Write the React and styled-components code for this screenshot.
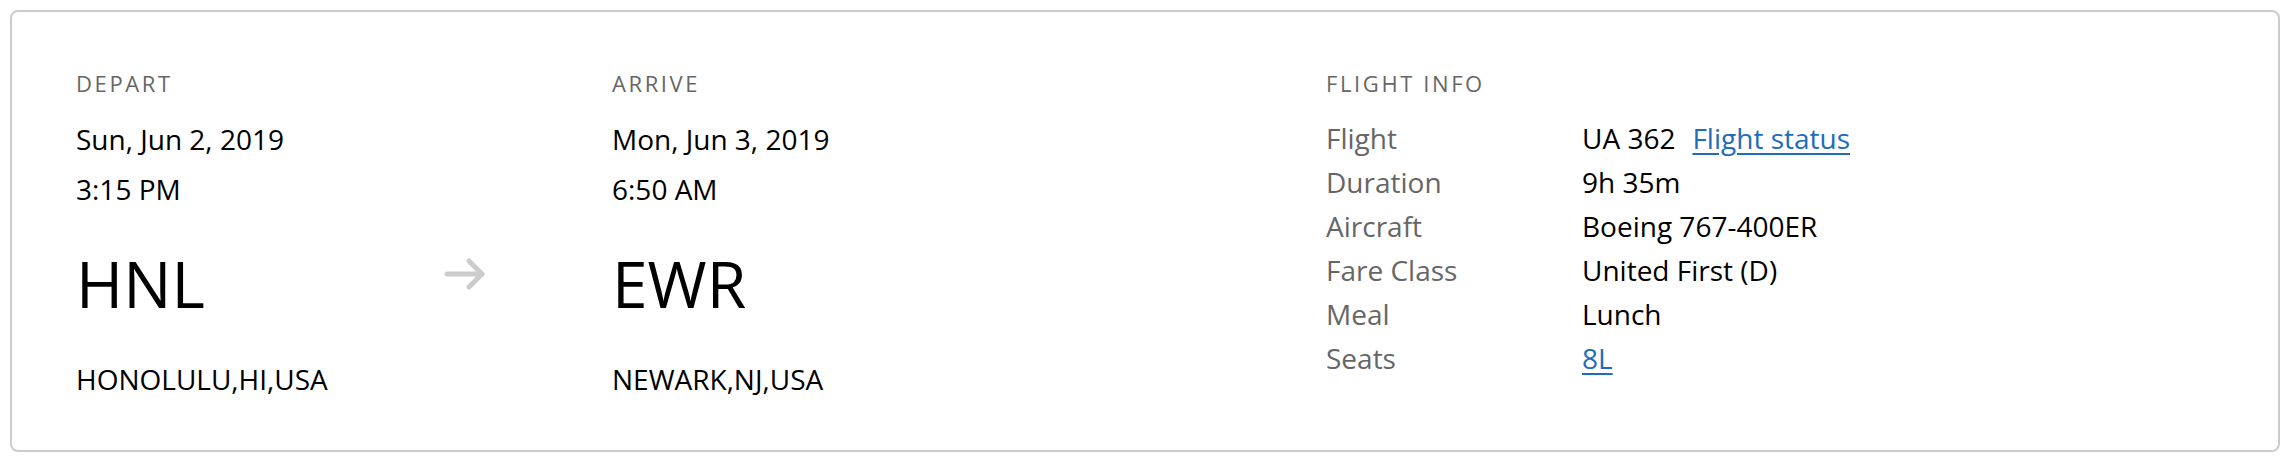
import React from "react";
import styled, { createGlobalStyle } from "styled-components";

const Global = createGlobalStyle`
  html, body { margin: 0; padding: 0; background: #ffffff; }
  body { font-family: "Open Sans", "Liberation Sans", sans-serif; color: #000; }
`;

const Page = styled.div`
  padding: 10px;
`;

const Card = styled.section`
  border: 2px solid #cccccc;
  border-radius: 8px;
  background: #ffffff;
  padding: 56px 64px 46px 64px;
  display: flex;
  align-items: flex-start;
`;

const Station = styled.div`
  width: ${(p) => p.$width}px;
  flex: none;
  display: flex;
  flex-direction: column;
`;

const Label = styled.div`
  font-size: 22px;
  line-height: 30px;
  letter-spacing: 2.6px;
  text-transform: uppercase;
  color: #666666;
`;

const DateTime = styled.div`
  margin-top: 16px;
  font-size: 28px;
  line-height: 50px;
`;

const Code = styled.div`
  margin-top: 26px;
  font-size: 64px;
  line-height: 87px;
`;

const City = styled.div`
  margin-top: 27px;
  font-size: 28px;
  line-height: 50px;
`;

const ArrowCell = styled.div`
  width: 168px;
  flex: none;
  padding-top: 190px;
  color: #cccccc;
`;

const FlightInfo = styled.div`
  flex: 1;
  display: flex;
  flex-direction: column;
`;

const InfoTable = styled.dl`
  margin: 18px 0 0 0;
  display: grid;
  grid-template-columns: 256px 1fr;
  font-size: 28px;
  line-height: 44px;
`;

const Term = styled.dt`
  color: #666666;
`;

const Value = styled.dd`
  margin: 0;
  color: #000000;
`;

const Link = styled.a`
  color: #1e6cbb;
  text-decoration: underline;
  text-underline-offset: 4px;
  margin-left: ${(p) => (p.$spaced ? "17px" : "0")};
`;

const Arrow = () => (
  <svg width="42" height="32" viewBox="0 0 42 32" fill="none" stroke="currentColor" strokeWidth="5" strokeLinecap="round" strokeLinejoin="round">
    <line x1="3" y1="16" x2="38" y2="16" />
    <polyline points="25,3 38,16 25,29" />
  </svg>
);

const rows = [
  ["Flight", <>UA 362<Link href="#" $spaced>Flight status</Link></>],
  ["Duration", "9h 35m"],
  ["Aircraft", "Boeing 767-400ER"],
  ["Fare Class", "United First (D)"],
  ["Meal", "Lunch"],
  ["Seats", <Link href="#">8L</Link>],
];

export default function App() {
  return (
    <Page>
      <Global />
      <Card>
        <Station $width={368}>
          <Label>Depart</Label>
          <DateTime>
            Sun, Jun 2, 2019
            <br />
            3:15 PM
          </DateTime>
          <Code>HNL</Code>
          <City>HONOLULU,HI,USA</City>
        </Station>
        <ArrowCell>
          <Arrow />
        </ArrowCell>
        <Station $width={714}>
          <Label>Arrive</Label>
          <DateTime>
            Mon, Jun 3, 2019
            <br />
            6:50 AM
          </DateTime>
          <Code>EWR</Code>
          <City>NEWARK,NJ,USA</City>
        </Station>
        <FlightInfo>
          <Label>Flight Info</Label>
          <InfoTable>
            {rows.map(([k, v]) => (
              <React.Fragment key={k}>
                <Term>{k}</Term>
                <Value>{v}</Value>
              </React.Fragment>
            ))}
          </InfoTable>
        </FlightInfo>
      </Card>
    </Page>
  );
}
